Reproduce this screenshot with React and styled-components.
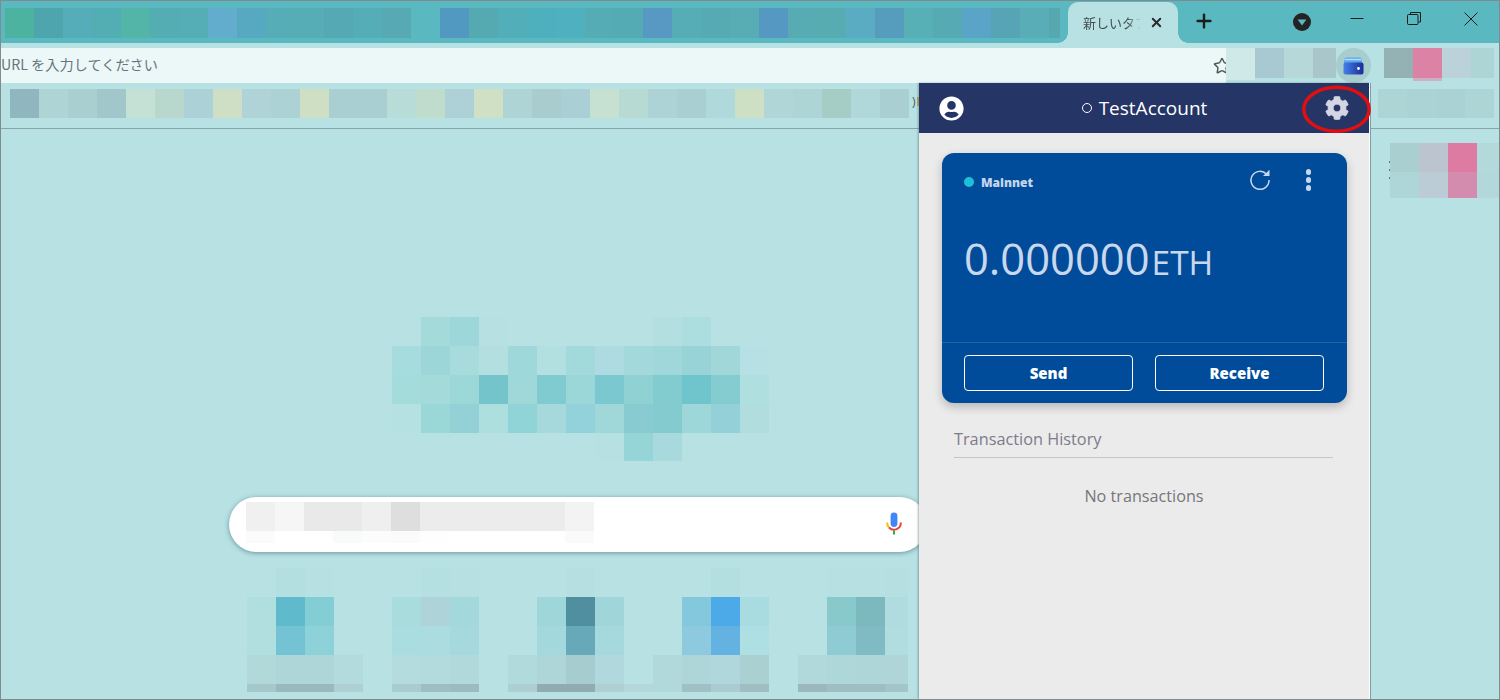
import React from "react";
import styled, { createGlobalStyle } from "styled-components";
import { FaCog, FaUserCircle } from "react-icons/fa";
import { Plus, Star, X } from "lucide-react";

const n = null;

const stripColors = [[
  "#4bb39f", "#4fa5ae", "#54adb8", "#52aeb3", "#52b5a7", "#55adb4", "#55aeb6", "#62acce", "#56a9c0",
  "#56adb8", "#57adb6", "#55a9b4", "#55adb8", "#57aab4", "#5ab8c1", "#5299c1", "#55aab2", "#52aeb8",
  "#4fb0bd", "#4fb0bf", "#55acb5", "#55abb4", "#5899c3", "#56adb6", "#56aab3", "#57adb3", "#5599c3",
  "#57abb2", "#57acb2", "#59acc2", "#559cbd", "#58b0b7", "#56aab3", "#59a4c7", "#56a4b6", "#58adb6", "#56a8ae",
]];

const bookmarkColors = [[
  "#90b6bf", "#aed4d5", "#a9cfd0", "#a2c7cb", "#c5e0d4", "#b8d8ce", "#acd1d6", "#cfdfc5", "#afd3d7",
  "#add2d5", "#cfdfc4", "#a9cfd2", "#a9cfd2", "#b8dcd8", "#c0dccd", "#add1d7", "#cfe0c4", "#aed4d6",
  "#a9cdcf", "#aacfd4", "#c6e1d2", "#b7dad3", "#aed3d6", "#a9cfd2", "#b0d9dc", "#cde0c3", "#b0d6d8",
  "#aed5d6", "#a6cdc5", "#b0d7da", "#aacfd3",
]];

const toolbarLeftColors = [
  ["#cfe8e8", "#a9c9d2", "#b6d8d9", "#a9c7ca"],
  ["#cfe8e8", n, n, n],
];
const toolbarRightColors = [
  ["#94b2b3", "#dc82a5", "#bcd2da", "#add5d6"],
  [n, "#cdb0c4", n, n],
];
const bookmarkRightColors = [["#aed5d6", "#abd3d5", "#aad2d5", "#aed5d6"]];

const sideColors = [
  ["#a9cfd0", "#bcc4d0", "#dd7ba3", "#b4d9db"],
  ["#aed5d7", "#bbccd6", "#d38bae", "#b3d8db"],
];

const logoColors = [
  [n, "#a5dadb", "#9dd7da", "#b6e0e2", n, n, n, n, n, "#b4dfe1", "#addedf", n, n],
  ["#a6dcde", "#9cd6d9", "#a8dbdc", "#b3dfe1", "#9fd8da", "#b2dfe0", "#a2d9da", "#addbe1", "#a3d9da", "#a0d7da", "#98d4d7", "#a1d7d8", "#b6e0e3"],
  ["#a3dcdb", "#a4dad9", "#9cd8d8", "#74c5cb", "#a0d8d9", "#7fcbcf", "#9bd6d8", "#7cc8d0", "#90d1d3", "#82cbcf", "#70c4cb", "#85ccd0", "#b0dfe0"],
  ["#b6e1e3", "#9ad8d8", "#94d1d6", "#addfdf", "#91d4d7", "#a5d9dc", "#94d2db", "#a0d7d9", "#88ccd2", "#84cbcf", "#9dd7da", "#93d0d8", "#b2dddf"],
  [n, n, n, n, n, n, n, "#b7e0e2", "#96d5d7", "#a8dadd", n, n, n],
];

const searchColors = [
  ["#f0f0f0", "#f6f6f6", "#e9e9e9", "#e9e9e9", "#efefef", "#dedede", "#ececec", "#ececec", "#ececec", "#ececec", "#ececec", "#f3f3f3"],
  ["#fbfbfb", "#ffffff", "#ffffff", "#f9fafa", "#fcfcfc", "#fbfbfb", "#fefefe", "#ffffff", "#ffffff", "#ffffff", "#ffffff", "#fafafa"],
];

const shortcutColors = [
  [n, "#b4dfe1", "#b6e0e2", n, n, n, "#b5e0e1", "#b7e0e2", n, n, n, "#b5dfe1", n, n, n, n, "#b3dfe1", n, n, n, "#b6e0e2", "#b6e0e2", "#b5dfe1"],
  ["#b1dfe0", "#5fbacb", "#83cdd5", n, n, "#a8dcdd", "#aed4da", "#a3d8dc", n, n, "#9ed6da", "#4f8f9f", "#a0d5da", n, n, "#84c8dd", "#4daae8", "#a9dce0", n, n, "#88c9cc", "#7cb9bf", "#b0dcdf"],
  ["#b1dfe0", "#73c3d4", "#8dd1d9", n, n, "#aadddf", "#abdde0", "#a6d9de", n, n, "#a3d9dd", "#67a9b9", "#a6d9de", n, n, "#8dcadf", "#64b2e2", "#aee0e3", n, n, "#8fcbd2", "#80bbc3", "#b1dde0"],
  ["#b1d9da", "#aed5d7", "#aed5d7", "#b3dadc", n, "#b4dcde", "#b3dadc", "#b1d9dc", n, "#b1dadc", "#aed5d7", "#a6cccf", "#b1d8dc", n, "#b1d9db", "#aed5d7", "#b0d7dc", "#abd0d2", n, "#b1d9db", "#aed7d9", "#aed5d7", "#afd5d8"],
  ["#a5c8cb", "#9ab9be", "#9ab9be", "#aed0d2", n, "#a9ccd0", "#9fbec3", "#9cbbc0", n, "#adcfd2", "#90acb0", "#90acb0", "#aed0d3", "#b4d8da", "#b1d9db", "#a1c0c4", "#a9ccd0", "#9fbdc2", n, "#9ab8bd", "#9fbec2", "#9fbec2", "#a3c4c8"],
];

const Mosaic = ({ colors, rowHeights, className }) => (
  <MosaicGrid
    className={className}
    $columns={colors[0].length}
    $rows={rowHeights || colors.map(() => 29)}
  >
    {colors.flat().map((color, i) => (
      <MosaicCell key={i} $color={color} />
    ))}
  </MosaicGrid>
);

const App = () => {
  return (
    <>
      <GlobalStyle />
      <Window>
        <TabStrip>
          <StripPixels colors={stripColors} rowHeights={[30]} />
          <Tab>
            <TabTitle>新しいタブ</TabTitle>
            <X size={15} strokeWidth={3} color="#2a2a2a" />
          </Tab>
          <NewTabButton>
            <Plus size={22} strokeWidth={2.6} color="#1c1c1c" />
          </NewTabButton>
          <ProfileMenu>
            <svg width="18" height="18" viewBox="0 0 18 18">
              <circle cx="9" cy="9" r="9" fill="#232323" />
              <path d="M4.6 6.6h8.8L9 12.4z" fill="#5ab8c1" />
            </svg>
          </ProfileMenu>
          <WindowButton>
            <svg width="14" height="14" viewBox="0 0 14 14">
              <path d="M0.5 6.5h13" stroke="#1c1c1c" strokeWidth="1" />
            </svg>
          </WindowButton>
          <WindowButton>
            <svg width="14" height="14" viewBox="0 0 14 14">
              <path d="M3.5 2.5V0.5h10v9.5h-2" fill="none" stroke="#1c1c1c" />
              <rect x="0.5" y="2.5" width="10.5" height="10" rx="1" fill="none" stroke="#1c1c1c" />
            </svg>
          </WindowButton>
          <WindowButton>
            <svg width="14" height="14" viewBox="0 0 14 14">
              <path d="M0.5 0.5l13 13M13.5 0.5l-13 13" stroke="#1c1c1c" strokeWidth="1" />
            </svg>
          </WindowButton>
        </TabStrip>

        <AddressRow>
          <Omnibox>
            <OmniboxText>URL を入力してください</OmniboxText>
            <StarSlot>
              <Star size={18} strokeWidth={2} color="#4f5a5c" />
            </StarSlot>
          </Omnibox>
          <ToolbarPixels colors={toolbarLeftColors} rowHeights={[30, 2]} />
          <WalletButton>
            <svg width="21" height="18" viewBox="0 0 21 18">
              <defs>
                <linearGradient id="walletBody" x1="0" y1="0" x2="1" y2="0">
                  <stop offset="0" stopColor="#4580ea" />
                  <stop offset="1" stopColor="#1b2c96" />
                </linearGradient>
              </defs>
              <path d="M1 3Q1 0.5 3.5 0.5h13Q19 0.5 19 3v4H1z" fill="#5fa5ee" />
              <path d="M1.5 1.8h17v1.4h-17z" fill="#b5e0fa" />
              <rect x="0.5" y="5.5" width="20" height="12" rx="2" fill="url(#walletBody)" />
              <circle cx="15.5" cy="11.5" r="1.4" fill="#ffffff" />
            </svg>
          </WalletButton>
          <ToolbarPixelsRight colors={toolbarRightColors} rowHeights={[30, 3]} />
        </AddressRow>

        <BookmarkBar>
          <Mosaic colors={bookmarkColors} />
          <BookmarkStub>)</BookmarkStub>
          <BookmarkRightPixels colors={bookmarkRightColors} />
        </BookmarkBar>

        <NewTabPage>
          <MainColumn>
            <LogoPixels colors={logoColors} rowHeights={[29, 29, 29, 29, 28]} />
            <SearchBox>
              <Mosaic colors={searchColors} rowHeights={[29, 12]} />
              <MicIcon>
                <svg width="16" height="23" viewBox="0 0 16 23">
                  <rect x="4.6" y="0.5" width="6.8" height="14.5" rx="3.4" fill="#4285f4" />
                  <path d="M1.2 10.5A6.8 6.8 0 0 0 3 15.5" fill="none" stroke="#fbbc05" strokeWidth="2" />
                  <path d="M3 15.5A6.8 6.8 0 0 0 14.8 10.5" fill="none" stroke="#ea4335" strokeWidth="2" />
                  <rect x="7" y="18.5" width="2" height="4" fill="#34a853" />
                </svg>
              </MicIcon>
            </SearchBox>
            <ShortcutPixels colors={shortcutColors} rowHeights={[29, 29, 29, 29, 8]} />
          </MainColumn>
          <SideDots>
            <SideDot />
            <SideDot />
            <SideDot />
          </SideDots>
          <SidePixels colors={sideColors} rowHeights={[29, 26]} />
        </NewTabPage>

        <Popup>
          <PopupHeader>
            <FaUserCircle size={25} color="#ffffff" />
            <AccountName>
              <AccountDot />
              TestAccount
            </AccountName>
            <FaCog size={24} color="#d3d6e3" stroke="#d3d6e3" strokeWidth={14} />
          </PopupHeader>
          <PopupBody>
            <BalanceCard>
              <CardTop>
                <NetworkRow>
                  <NetworkDot />
                  <NetworkName>Mainnet</NetworkName>
                  <CardActions>
                    <svg width="22" height="22" viewBox="0 0 22 22">
                      <path d="M17.6 5.2A9 9 0 1 0 20 11" fill="none" stroke="#c8d8ec" strokeWidth="1.5" />
                      <path d="M14 7h6.5V0.8z" fill="#c8d8ec" />
                    </svg>
                    <Kebab>
                      <KebabDot />
                      <KebabDot />
                      <KebabDot />
                    </Kebab>
                  </CardActions>
                </NetworkRow>
                <Balance>
                  <Amount>0.000000</Amount>
                  <Unit>ETH</Unit>
                </Balance>
              </CardTop>
              <CardFooter>
                <CardButton>Send</CardButton>
                <CardButton>Receive</CardButton>
              </CardFooter>
            </BalanceCard>
            <HistoryTitle>Transaction History</HistoryTitle>
            <NoTransactions>No transactions</NoTransactions>
          </PopupBody>
          <Annotation width="70" height="50" viewBox="0 0 70 50">
            <ellipse cx="34.5" cy="24.3" rx="32.7" ry="22" fill="none" stroke="#e00f12" strokeWidth="3.5" />
          </Annotation>
        </Popup>
      </Window>
    </>
  );
};

export default App;

const GlobalStyle = createGlobalStyle`
  html, body {
    margin: 0;
    padding: 0;
    background: #b8e1e4;
  }
`;

const MosaicGrid = styled.div`
  display: grid;
  grid-template-columns: repeat(${(p) => p.$columns}, 29px);
  grid-template-rows: ${(p) => p.$rows.map((h) => `${h}px`).join(" ")};
  flex-shrink: 0;
`;

const MosaicCell = styled.span`
  background: ${(p) => p.$color || "transparent"};
`;

const Window = styled.div`
  position: relative;
  width: 1500px;
  height: 700px;
  box-sizing: border-box;
  border: 1px solid #7f8b8c;
  overflow: hidden;
  background: #b8e1e4;
  font-family: "Open Sans", "Noto Sans", sans-serif;
`;

const TabStrip = styled.div`
  display: flex;
  align-items: flex-start;
  height: 42px;
  background: #5ab8c1;
`;

const StripPixels = styled(Mosaic)`
  width: 1055px;
  margin: 7px 0 0 4px;
  overflow: hidden;
`;

const Tab = styled.div`
  position: relative;
  box-sizing: border-box;
  display: flex;
  align-items: center;
  width: 110px;
  height: 41px;
  margin: 1px 0 0 8px;
  padding-left: 15px;
  border-radius: 10px 10px 0 0;
  background: #b8e1e4;

  &::before,
  &::after {
    content: "";
    position: absolute;
    bottom: 0;
    width: 10px;
    height: 10px;
  }

  &::before {
    left: -10px;
    background: radial-gradient(circle at 0 0, transparent 9.5px, #b8e1e4 10px);
  }

  &::after {
    right: -10px;
    background: radial-gradient(circle at 100% 0, transparent 9.5px, #b8e1e4 10px);
  }
`;

const TabTitle = styled.span`
  width: 58px;
  margin-right: 8px;
  overflow: hidden;
  white-space: nowrap;
  font-family: "Noto Sans CJK JP", sans-serif;
  font-size: 13px;
  color: #444c4e;
  -webkit-mask-image: linear-gradient(to right, #000 75%, transparent);
  mask-image: linear-gradient(to right, #000 75%, transparent);
`;

const NewTabButton = styled.div`
  display: flex;
  margin: 9px 0 0 15px;
`;

const ProfileMenu = styled.div`
  display: flex;
  margin: 12px 18px 0 78px;
`;

const WindowButton = styled.div`
  display: flex;
  justify-content: center;
  align-items: center;
  width: 57px;
  height: 36px;
`;

const AddressRow = styled.div`
  display: flex;
  height: 40px;
  padding-top: 5px;
  box-sizing: border-box;
`;

const Omnibox = styled.div`
  display: flex;
  align-items: center;
  justify-content: space-between;
  width: 1225px;
  height: 35px;
  overflow: hidden;
  background: #ecf8f8;
`;

const OmniboxText = styled.span`
  margin-bottom: 3px;
  font-family: "Noto Sans CJK JP", sans-serif;
  font-size: 14.2px;
  color: #66757a;
`;

const StarSlot = styled.span`
  display: flex;
  margin-right: -5px;
`;

const ToolbarPixels = styled(Mosaic)`
  width: 110px;
  overflow: hidden;
`;

const WalletButton = styled.div`
  display: flex;
  justify-content: center;
  align-items: center;
  width: 35px;
  height: 35px;
  border-radius: 50%;
  background: #a8cdcf;
`;

const ToolbarPixelsRight = styled(Mosaic)`
  width: 110px;
  margin-left: 13px;
  overflow: hidden;
`;

const BookmarkBar = styled.div`
  display: flex;
  box-sizing: border-box;
  height: 46px;
  padding: 6px 0 0 9px;
  border-bottom: 1px solid #87a5a8;
`;

const BookmarkStub = styled.span`
  width: 10px;
  margin-left: 3px;
  font-size: 12px;
  line-height: 26px;
  color: #4c5a5c;

  &::after {
    content: "";
    display: inline-block;
    width: 4px;
    height: 9px;
    margin-left: 1px;
    background: #c9aa55;
  }
`;

const BookmarkRightPixels = styled(Mosaic)`
  width: 110px;
  margin-left: 456px;
`;

const NewTabPage = styled.div`
  display: flex;
  align-items: flex-start;
`;

const MainColumn = styled.div`
  width: 1388px;
  flex-shrink: 0;
`;

const LogoPixels = styled(Mosaic)`
  margin: 188px 0 0 391px;
`;

const SearchBox = styled.div`
  display: flex;
  justify-content: space-between;
  box-sizing: border-box;
  width: 698px;
  height: 55px;
  margin: 36px 0 0 228px;
  padding: 5px 25px 0 17px;
  border-radius: 28px;
  background: #ffffff;
  box-shadow: 0 1px 5px rgba(32, 90, 100, 0.55);
`;

const MicIcon = styled.div`
  display: flex;
  margin-top: 10px;
`;

const ShortcutPixels = styled(Mosaic)`
  width: 661px;
  margin: 16px 0 0 246px;
  overflow: hidden;
`;

const SideDots = styled.div`
  display: flex;
  flex-direction: column;
  gap: 6px;
  width: 1px;
  margin: 32px 0 0 0;
`;

const SideDot = styled.span`
  width: 1px;
  height: 2px;
  background: #5f7377;
`;

const SidePixels = styled(Mosaic)`
  margin-top: 14px;
`;

const Popup = styled.div`
  position: absolute;
  top: 82px;
  left: 918px;
  bottom: 0;
  width: 450px;
  display: flex;
  flex-direction: column;
  background: #ebebeb;
  border-right: 1px solid #ffffff;
  box-shadow: 1px 0 0 #7f9ea2, -1px 0 2px rgba(60, 90, 95, 0.45);
`;

const PopupHeader = styled.div`
  display: flex;
  align-items: center;
  justify-content: space-between;
  flex-shrink: 0;
  height: 50px;
  padding: 0 20px;
  background: #243566;
`;

const AccountName = styled.div`
  display: flex;
  align-items: center;
  font-size: 19px;
  color: #ffffff;
`;

const AccountDot = styled.span`
  box-sizing: border-box;
  width: 10px;
  height: 10px;
  margin-right: 7px;
  border: 1px solid #ffffff;
  border-radius: 50%;
`;

const PopupBody = styled.div`
  padding: 20px 23px 0;
`;

const BalanceCard = styled.div`
  display: flex;
  flex-direction: column;
  width: 405px;
  height: 250px;
  border-radius: 12px;
  background: #014c9a;
  box-shadow: 0 4px 10px rgba(0, 0, 0, 0.22);
`;

const CardTop = styled.div`
  flex: 1;
  padding: 15px 22px 0;
`;

const NetworkRow = styled.div`
  display: flex;
  align-items: center;
  height: 28px;
`;

const NetworkDot = styled.span`
  width: 10px;
  height: 10px;
  margin-right: 7px;
  border-radius: 50%;
  background: #1dc0d9;
`;

const NetworkName = styled.span`
  font-size: 12px;
  font-weight: 800;
  color: #c4d6ec;
`;

const CardActions = styled.div`
  display: flex;
  align-items: center;
  margin-left: auto;
  margin-right: 14px;
  gap: 35px;
  transform: translateY(-2px);
`;

const Kebab = styled.div`
  display: flex;
  flex-direction: column;
  gap: 2.6px;
`;

const KebabDot = styled.span`
  width: 5.4px;
  height: 5.4px;
  border-radius: 50%;
  background: #c8d8ec;
`;

const Balance = styled.div`
  display: flex;
  align-items: baseline;
  margin-top: 32px;
  color: #c9d8ec;
`;

const Amount = styled.span`
  font-size: 43.5px;
  line-height: 62px;
`;

const Unit = styled.span`
  margin-left: 2px;
  font-size: 33.5px;
`;

const CardFooter = styled.div`
  display: flex;
  justify-content: space-between;
  box-sizing: border-box;
  height: 61px;
  padding: 12px 23px 0 22px;
  border-top: 1px solid rgba(255, 255, 255, 0.14);
`;

const CardButton = styled.div`
  box-sizing: border-box;
  width: 169px;
  height: 36px;
  border: 1px solid #ffffff;
  border-radius: 4px;
  text-align: center;
  font-size: 15px;
  font-weight: 800;
  line-height: 34px;
  color: #ffffff;
`;

const HistoryTitle = styled.div`
  margin: 24px 13px 0 12px;
  padding-bottom: 6px;
  border-bottom: 1px solid #c6c5ca;
  font-size: 16.3px;
  line-height: 24px;
  color: #7c7b88;
`;

const NoTransactions = styled.div`
  margin-top: 26px;
  text-align: center;
  font-size: 16.2px;
  line-height: 24px;
  color: #77767c;
`;

const Annotation = styled.svg`
  position: absolute;
  top: 2px;
  left: 383px;
`;
